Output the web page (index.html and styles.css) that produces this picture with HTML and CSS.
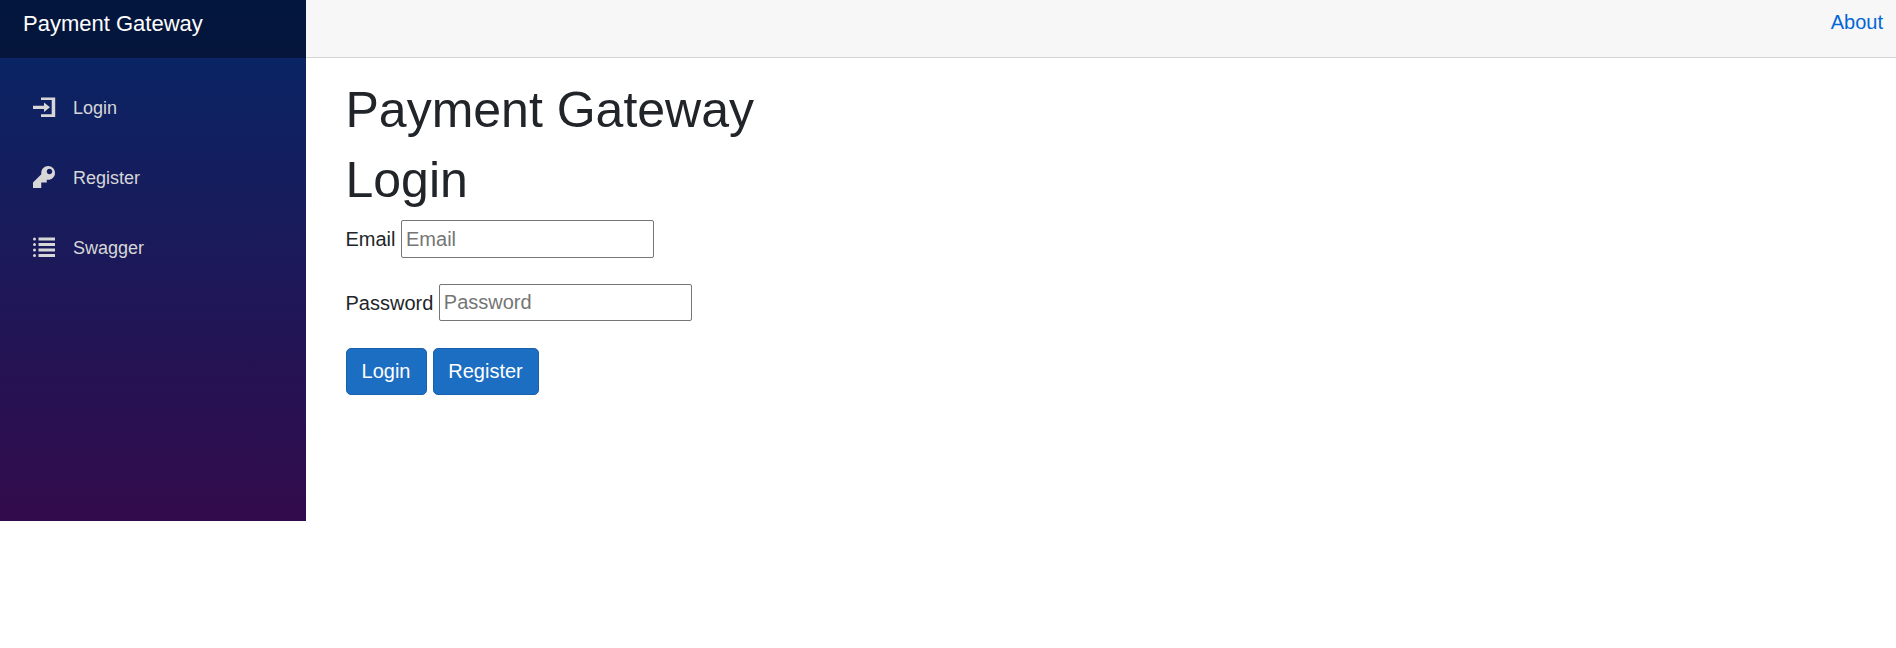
FILE: index.html
```html
<!DOCTYPE html>
<html lang="en">
<head>
<meta charset="utf-8">
<title>Payment Gateway</title>
<link rel="stylesheet" href="styles.css">
</head>
<body>
<div class="page">
  <aside class="sidebar">
    <div class="brand">Payment Gateway</div>
    <nav class="menu">
      <a class="menu-item"><svg class="icon" viewBox="0 0 22 22"><path d="M8 .4H22.200V20H8V17.200H18.700V3H8zM11 5.500L17 10.200L11 15V11.900H0V8.700H11z"/></svg>Login</a>
      <a class="menu-item"><svg class="icon icon-key" viewBox="0 0 8 8"><path d="M5.500 0C4.120 0 3 1.120 3 2.500c0 .16 0 .32.030.47L0 6v2h3V6h2V5l.030-.03c.15.030.31.030.47.030C6.880 5 8 3.880 8 2.500S6.880 0 5.500 0zm.5 1c.55 0 1 .45 1 1s-.45 1-1 1-1-.45-1-1 .45-1 1-1z"/></svg>Register</a>
      <a class="menu-item"><svg class="icon" viewBox="0 0 22 22"><path d="M5.500.5H22V3.400H5.500zM5.500 6H22V8.900H5.500zM5.500 11.500H22V14.400H5.500zM5.500 17H22V19.900H5.500z"/><circle cx="1.500" cy="2" r="1.500"/><circle cx="1.500" cy="7.500" r="1.500"/><circle cx="1.500" cy="13" r="1.500"/><circle cx="1.500" cy="18.500" r="1.500"/></svg>Swagger</a>
    </nav>
  </aside>
  <main class="main">
    <header class="topbar"><a class="about">About</a></header>
    <section class="content">
      <h1 class="title">Payment Gateway</h1>
      <h1 class="title">Login</h1>
      <form>
        <div class="field"><label for="email">Email</label><input class="input" id="email" type="text" placeholder="Email"></div>
        <div class="field"><label for="password">Password</label><input class="input input-password" id="password" type="password" placeholder="Password"></div>
        <div class="actions"><button class="btn btn-login" type="button">Login</button><button class="btn btn-register" type="button">Register</button></div>
      </form>
    </section>
  </main>
</div>
</body>
</html>
```
FILE: styles.css
```css
* { box-sizing: border-box; }
body {
  margin: 0;
  background: #fff;
  color: #212529;
  font: 20px/30px "Liberation Sans", Arial, sans-serif;
}
.page { display: flex; }
.sidebar {
  width: 306px;
  height: 521px;
  flex: none;
  background: linear-gradient(180deg, rgb(5, 39, 103) 0%, #3a0647 70%);
  background-size: 100% 870px;
}
.brand {
  height: 58px;
  padding: 7px 0 0 23px;
  background: rgba(0, 0, 0, .4);
  color: #fff;
  font-size: 22px;
  line-height: 33px;
}
.menu { padding: 20px 20px 0; }
.menu-item {
  display: flex;
  align-items: center;
  height: 60px;
  margin-bottom: 10px;
  padding-left: 13px;
  color: #d7d7d7;
  font-size: 18px;
}
.icon {
  width: 22px;
  height: 22px;
  margin-right: 18px;
  fill: currentColor;
  overflow: visible;
}
.icon-key { margin-bottom: 3px; }
.main { flex: 1; }
.topbar {
  display: flex;
  justify-content: flex-end;
  height: 58px;
  padding: 7px 13px 0 0;
  border-bottom: 1px solid #d6d5d5;
  background: #f7f7f7;
}
.about { color: #0366d6; }
.content { padding: 22px 39.500px 0; }
.title {
  margin: 0 0 10px;
  font-size: 50px;
  font-weight: 500;
  line-height: 60px;
}
.field {
  display: flex;
  align-items: center;
  gap: 5.500px;
  height: 38px;
  margin-bottom: 26px;
}
.input {
  width: 253px;
  height: 38px;
  padding: 1px 4px;
  border: 1px solid #767676;
  border-radius: 2px;
  font: inherit;
}
.input-password { height: 37px; align-self: flex-start; }
.input::placeholder { color: #757575; }
.actions { display: flex; gap: 6px; }
.btn {
  height: 47px;
  padding: 0 0 1px;
  border: 1px solid #1861ac;
  border-radius: 5px;
  background: #1b6ec2;
  color: #fff;
  font: inherit;
}
.btn-login { width: 81px; }
.btn-register { width: 106px; }
```
